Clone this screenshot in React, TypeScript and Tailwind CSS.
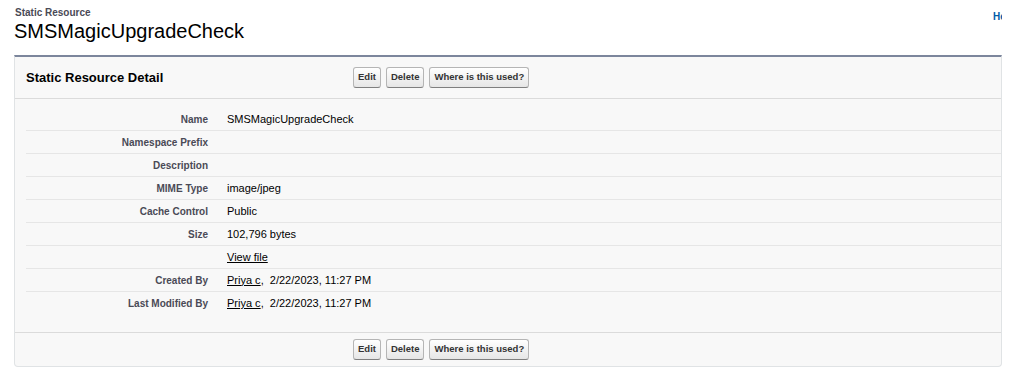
const rows: { label: string; value?: React.ReactNode }[] = [
  { label: 'Name', value: 'SMSMagicUpgradeCheck' },
  { label: 'Namespace Prefix' },
  { label: 'Description' },
  { label: 'MIME Type', value: 'image/jpeg' },
  { label: 'Cache Control', value: 'Public' },
  { label: 'Size', value: '102,796 bytes' },
  { label: '', value: <a className="underline">View file</a> },
  {
    label: 'Created By',
    value: (
      <>
        <a className="underline">Priya c</a>,&nbsp; 2/22/2023, 11:27 PM
      </>
    ),
  },
  {
    label: 'Last Modified By',
    value: (
      <>
        <a className="underline">Priya c</a>,&nbsp; 2/22/2023, 11:27 PM
      </>
    ),
  },
]

function Btn({ children }: { children: React.ReactNode }) {
  return (
    <button className="h-[21px] rounded-[3px] border border-[#b5b5b5] border-b-[#7f7f7f] bg-gradient-to-b from-white to-[#e6e6e6] px-[4px] text-[9.5px] font-bold text-[#333]">
      {children}
    </button>
  )
}

function Buttons() {
  return (
    <div className="flex items-center gap-[5px]">
      <Btn>Edit</Btn>
      <Btn>Delete</Btn>
      <Btn>Where is this used?</Btn>
    </div>
  )
}

export default function App() {
  return (
    <div
      className="h-[390px] w-[1024px] overflow-hidden bg-white"
      style={{ fontFamily: '"Liberation Sans", Arial, sans-serif' }}
    >
      <div className="w-[1002px] pl-[14px]">
        <div className="flex justify-between">
          <div className="pt-[7px]">
            <div className="pl-[1px] text-[10px] leading-[12px] font-bold text-[#4a4a56]">Static Resource</div>
            <h1 className="text-[20px] leading-[24px] text-black">SMSMagicUpgradeCheck</h1>
          </div>
          <div className="w-[9px] overflow-hidden whitespace-nowrap pt-[9px] text-[10px] font-bold text-[#015ba7]">
            Help for this Page
          </div>
        </div>

        <div className="mt-[12px] rounded-b-[4px] border border-t-2 border-[#e0e3e5] border-t-[#7c869c] bg-[#f8f8f8]">
          <div className="flex h-[42px] items-center border-b border-[#dbdbdb]">
            <h2 className="w-[338px] pl-[11px] text-[13px] font-bold text-black">Static Resource Detail</h2>
            <Buttons />
          </div>

          <div className="pt-[9px] pb-[17px] pl-[11px]">
            {rows.map((r, i) => (
              <div
                key={i}
                className={`flex h-[23px] items-center ${i < rows.length - 1 ? 'border-b border-[#e6e6e6]' : ''}`}
              >
                <div className="w-[182px] text-right text-[10px] font-bold text-[#4a4a56]">{r.label}</div>
                <div className="pl-[19px] text-[11px] text-black">{r.value}</div>
              </div>
            ))}
          </div>

          <div className="flex h-[34px] items-center border-t border-[#dbdbdb]">
            <div className="w-[338px]" />
            <Buttons />
          </div>
        </div>
      </div>
    </div>
  )
}
